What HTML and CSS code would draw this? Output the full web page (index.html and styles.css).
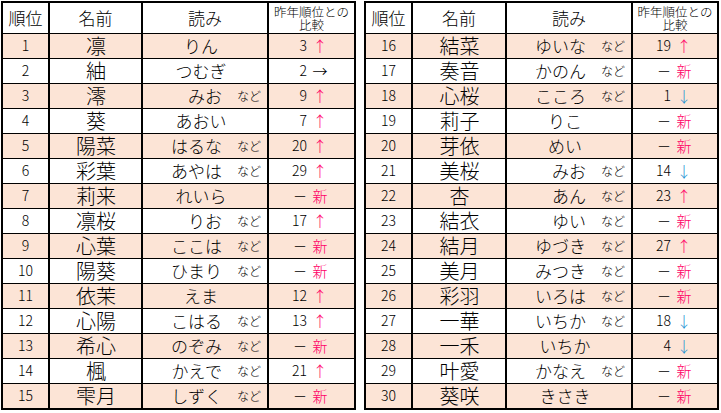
FILE: index.html
```html
<!DOCTYPE html>
<html lang="ja">
<head>
<meta charset="utf-8">
<title>名前ランキング</title>
<link rel="stylesheet" href="styles.css">
</head>
<body>
<div class="page">
  <div class="tbl left">
    <div class="row head"><div class="c rk">順位</div><div class="c nm-h">名前</div><div class="c yo-h">読み</div><div class="c cp-h"><span class="l">昨年順位との</span><span class="l">比較</span></div></div>
    <div class="row alt"><div class="c rk">1</div><div class="c nm">凛</div><div class="c yo"><span class="y">りん</span></div><div class="c cp"><span class="n">3</span><span class="mk up">↑</span></div></div>
    <div class="row"><div class="c rk">2</div><div class="c nm">紬</div><div class="c yo"><span class="y">つむぎ</span></div><div class="c cp"><span class="n">2</span><span class="mk same">→</span></div></div>
    <div class="row alt"><div class="c rk">3</div><div class="c nm">澪</div><div class="c yo nd"><span class="y">みお</span><span class="nado">など</span></div><div class="c cp"><span class="n">9</span><span class="mk up">↑</span></div></div>
    <div class="row"><div class="c rk">4</div><div class="c nm">葵</div><div class="c yo"><span class="y">あおい</span></div><div class="c cp"><span class="n">7</span><span class="mk up">↑</span></div></div>
    <div class="row alt"><div class="c rk">5</div><div class="c nm">陽菜</div><div class="c yo nd"><span class="y">はるな</span><span class="nado">など</span></div><div class="c cp"><span class="n">20</span><span class="mk up">↑</span></div></div>
    <div class="row"><div class="c rk">6</div><div class="c nm">彩葉</div><div class="c yo nd"><span class="y">あやは</span><span class="nado">など</span></div><div class="c cp"><span class="n">29</span><span class="mk up">↑</span></div></div>
    <div class="row alt"><div class="c rk">7</div><div class="c nm">莉来</div><div class="c yo"><span class="y">れいら</span></div><div class="c cp"><span class="n">－</span><span class="mk new">新</span></div></div>
    <div class="row"><div class="c rk">8</div><div class="c nm">凛桜</div><div class="c yo nd"><span class="y">りお</span><span class="nado">など</span></div><div class="c cp"><span class="n">17</span><span class="mk up">↑</span></div></div>
    <div class="row alt"><div class="c rk">9</div><div class="c nm">心葉</div><div class="c yo nd"><span class="y">ここは</span><span class="nado">など</span></div><div class="c cp"><span class="n">－</span><span class="mk new">新</span></div></div>
    <div class="row"><div class="c rk">10</div><div class="c nm">陽葵</div><div class="c yo nd"><span class="y">ひまり</span><span class="nado">など</span></div><div class="c cp"><span class="n">－</span><span class="mk new">新</span></div></div>
    <div class="row alt"><div class="c rk">11</div><div class="c nm">依茉</div><div class="c yo"><span class="y">えま</span></div><div class="c cp"><span class="n">12</span><span class="mk up">↑</span></div></div>
    <div class="row"><div class="c rk">12</div><div class="c nm">心陽</div><div class="c yo nd"><span class="y">こはる</span><span class="nado">など</span></div><div class="c cp"><span class="n">13</span><span class="mk up">↑</span></div></div>
    <div class="row alt"><div class="c rk">13</div><div class="c nm">希心</div><div class="c yo nd"><span class="y">のぞみ</span><span class="nado">など</span></div><div class="c cp"><span class="n">－</span><span class="mk new">新</span></div></div>
    <div class="row"><div class="c rk">14</div><div class="c nm">楓</div><div class="c yo nd"><span class="y">かえで</span><span class="nado">など</span></div><div class="c cp"><span class="n">21</span><span class="mk up">↑</span></div></div>
    <div class="row alt"><div class="c rk">15</div><div class="c nm">雫月</div><div class="c yo nd"><span class="y">しずく</span><span class="nado">など</span></div><div class="c cp"><span class="n">－</span><span class="mk new">新</span></div></div>
  </div>
  <div class="tbl right">
    <div class="row head"><div class="c rk">順位</div><div class="c nm-h">名前</div><div class="c yo-h">読み</div><div class="c cp-h"><span class="l">昨年順位との</span><span class="l">比較</span></div></div>
    <div class="row alt"><div class="c rk">16</div><div class="c nm">結菜</div><div class="c yo nd"><span class="y">ゆいな</span><span class="nado">など</span></div><div class="c cp"><span class="n">19</span><span class="mk up">↑</span></div></div>
    <div class="row"><div class="c rk">17</div><div class="c nm">奏音</div><div class="c yo nd"><span class="y">かのん</span><span class="nado">など</span></div><div class="c cp"><span class="n">－</span><span class="mk new">新</span></div></div>
    <div class="row alt"><div class="c rk">18</div><div class="c nm">心桜</div><div class="c yo nd"><span class="y">こころ</span><span class="nado">など</span></div><div class="c cp"><span class="n">1</span><span class="mk down">↓</span></div></div>
    <div class="row"><div class="c rk">19</div><div class="c nm">莉子</div><div class="c yo"><span class="y">りこ</span></div><div class="c cp"><span class="n">－</span><span class="mk new">新</span></div></div>
    <div class="row alt"><div class="c rk">20</div><div class="c nm">芽依</div><div class="c yo"><span class="y">めい</span></div><div class="c cp"><span class="n">－</span><span class="mk new">新</span></div></div>
    <div class="row"><div class="c rk">21</div><div class="c nm">美桜</div><div class="c yo nd"><span class="y">みお</span><span class="nado">など</span></div><div class="c cp"><span class="n">14</span><span class="mk down">↓</span></div></div>
    <div class="row alt"><div class="c rk">22</div><div class="c nm">杏</div><div class="c yo nd"><span class="y">あん</span><span class="nado">など</span></div><div class="c cp"><span class="n">23</span><span class="mk up">↑</span></div></div>
    <div class="row"><div class="c rk">23</div><div class="c nm">結衣</div><div class="c yo nd"><span class="y">ゆい</span><span class="nado">など</span></div><div class="c cp"><span class="n">－</span><span class="mk new">新</span></div></div>
    <div class="row alt"><div class="c rk">24</div><div class="c nm">結月</div><div class="c yo nd"><span class="y">ゆづき</span><span class="nado">など</span></div><div class="c cp"><span class="n">27</span><span class="mk up">↑</span></div></div>
    <div class="row"><div class="c rk">25</div><div class="c nm">美月</div><div class="c yo nd"><span class="y">みつき</span><span class="nado">など</span></div><div class="c cp"><span class="n">－</span><span class="mk new">新</span></div></div>
    <div class="row alt"><div class="c rk">26</div><div class="c nm">彩羽</div><div class="c yo nd"><span class="y">いろは</span><span class="nado">など</span></div><div class="c cp"><span class="n">－</span><span class="mk new">新</span></div></div>
    <div class="row"><div class="c rk">27</div><div class="c nm">一華</div><div class="c yo nd"><span class="y">いちか</span><span class="nado">など</span></div><div class="c cp"><span class="n">18</span><span class="mk down">↓</span></div></div>
    <div class="row alt"><div class="c rk">28</div><div class="c nm">一禾</div><div class="c yo"><span class="y">いちか</span></div><div class="c cp"><span class="n">4</span><span class="mk down">↓</span></div></div>
    <div class="row"><div class="c rk">29</div><div class="c nm">叶愛</div><div class="c yo nd"><span class="y">かなえ</span><span class="nado">など</span></div><div class="c cp"><span class="n">－</span><span class="mk new">新</span></div></div>
    <div class="row alt"><div class="c rk">30</div><div class="c nm">葵咲</div><div class="c yo"><span class="y">きさき</span></div><div class="c cp"><span class="n">－</span><span class="mk new">新</span></div></div>
  </div>
</div>
</body>
</html>
```

FILE: styles.css
```css
* { box-sizing: border-box; }

body {
  margin: 0;
  background: #ffffff;
  color: #000000;
  font-family: "Noto Sans CJK JP", "Noto Sans", sans-serif;
  font-weight: 300;
}

.page {
  display: flex;
  align-items: flex-start;
  gap: 8px;
  padding: 1px 0 0 1px;
}

.tbl {
  display: flex;
  flex-direction: column;
  border: 2px solid #000;
}

.left { --cols: 47px 93px 126px 85px; }
.right { --cols: 47px 94px 126px 84px; }

.row {
  display: grid;
  grid-template-columns: var(--cols);
  height: 25px;
  border-bottom: 1px solid #000;
  background: #ffffff;
}

.row:last-child {
  height: 24px;
  border-bottom: 0;
}

.row.head { height: 31px; }

.row.alt { background: #fce4d6; }

.c {
  display: flex;
  align-items: center;
  justify-content: center;
  border-right: 2px solid #000;
  line-height: 1.1;
  white-space: nowrap;
}

.c:last-child { border-right: 0; }

.row.head .c {
  font-size: 17px;
}

.row.head .cp-h {
  flex-direction: column;
  font-size: 12.5px;
  line-height: 13px;
  text-align: center;
}

.rk {
  font-size: 14px;
}

.nm {
  font-size: 20px;
  padding-left: 1px;
}

.yo {
  font-size: 17px;
  padding-right: 8px;
}

.yo.nd {
  justify-content: flex-start;
  padding-right: 0;
}

.yo.nd .y {
  width: 79px;
  text-align: right;
}

.nado {
  font-size: 12px;
  margin-left: 15px;
  padding-bottom: 1px;
}

.cp {
  justify-content: flex-start;
  font-size: 14px;
}

.cp .n {
  width: 38px;
  text-align: right;
}

.mk {
  width: 26px;
  text-align: center;
  font-size: 15px;
}

.mk.up { color: #ff0066; }
.mk.down { color: #1a8fd1; }
.mk.same { color: #000000; }
.mk.new { color: #ff0066; }
```
